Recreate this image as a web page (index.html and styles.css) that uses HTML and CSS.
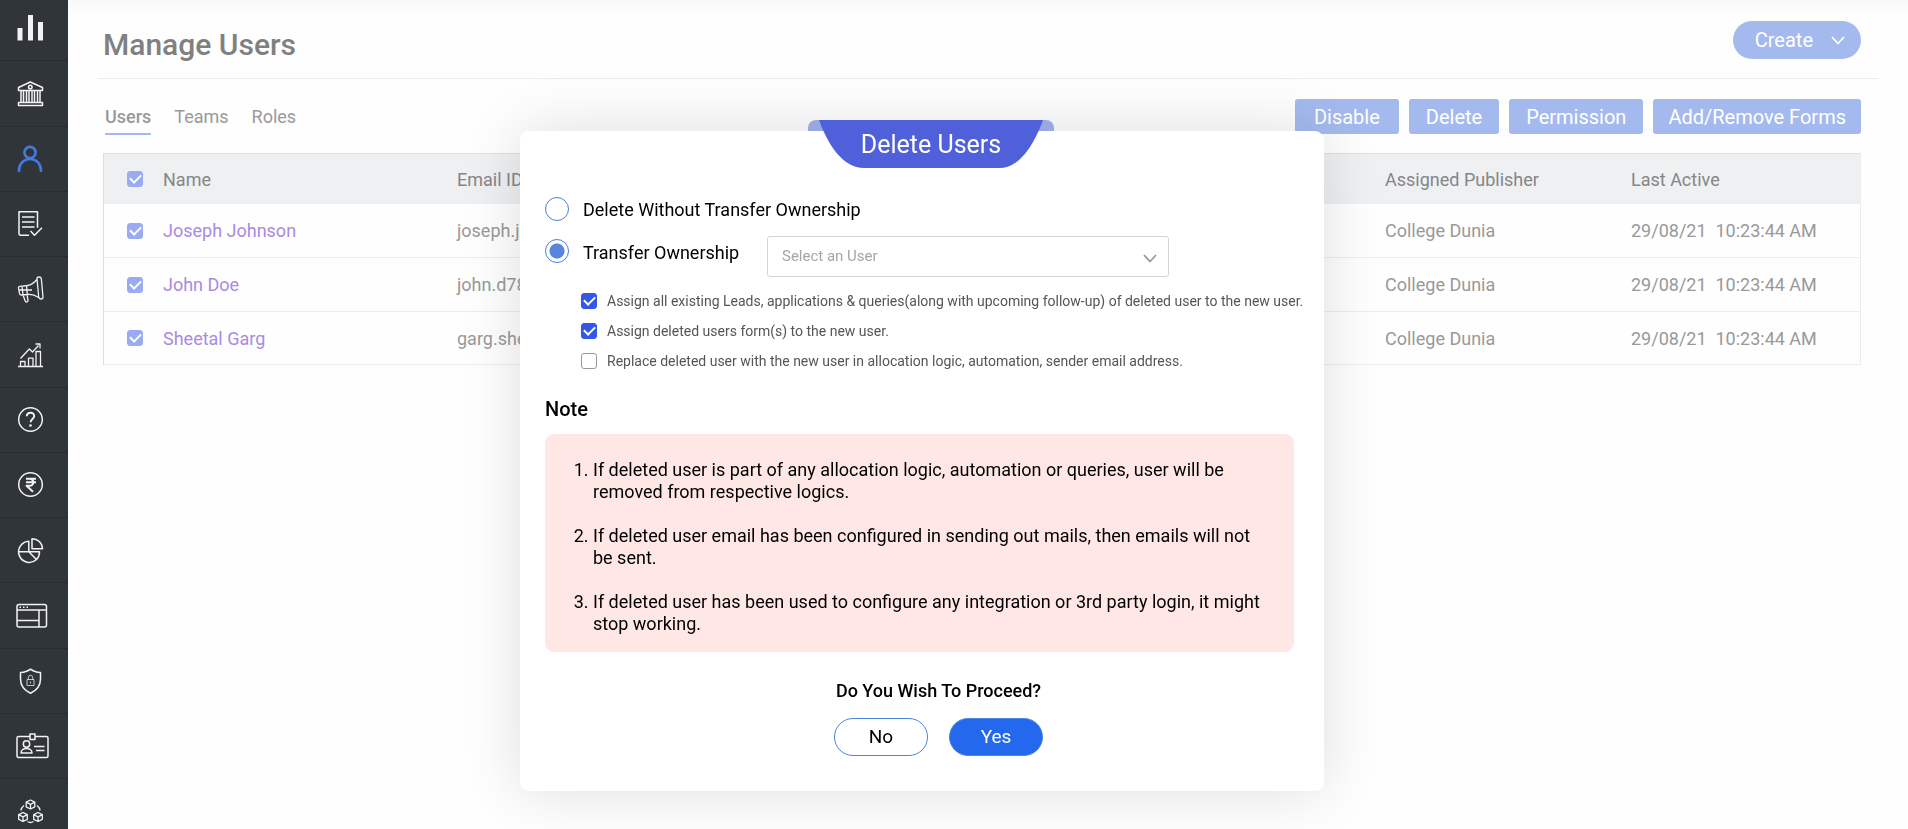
FILE: index.html
```html
<!DOCTYPE html>
<html lang="en">
<head>
<meta charset="utf-8">
<title>Manage Users</title>
<link rel="stylesheet" href="styles.css">
</head>
<body>
<div class="app">
  <nav class="sidebar" aria-label="Main">
    <a class="side-item" href="#" aria-label="Dashboard"><svg class="side-icon" viewBox="0 0 34 34"><path class="solid" d="M1.5 15h5v12.500h-5zM12 2h5v25.500h-5zM22 9h5v18.500h-5z"/></svg></a>
    <a class="side-item" href="#" aria-label="Institutes"><svg class="side-icon" viewBox="0 0 34 34"><path d="M2.500 13.500v-3L14.300 5l12.200 5.500v3zM5 13.500V25M7.500 13.500V25M10.500 13.500V25M13 13.500V25M16 13.500V25M18.500 13.500V25M21.500 13.500V25M24 13.500V25M2.500 25.500h24v3h-24z"/><circle cx="14.300" cy="10" r="1.800"/></svg></a>
    <a class="side-item active" href="#" aria-label="Users"><svg class="side-icon" viewBox="0 0 34 34"><circle cx="14" cy="10.500" r="5.600"/><path d="M3 30v-1.500C3 21.500 8 17 14 17s11 4.500 11 11.500V30"/></svg></a>
    <a class="side-item" href="#" aria-label="Applications"><svg class="side-icon" viewBox="0 0 34 34"><path d="M13 28.300H4.500a1.500 1.500 0 0 1-1.500-1.500V4.700h18.500v16M6 10h12.500M6 15h12.500M6 20h12.500M14.500 24l4 4.300 7.500-7.500"/></svg></a>
    <a class="side-item" href="#" aria-label="Campaigns"><svg class="side-icon thin" viewBox="0 0 34 34"><path d="M21 6.500q0-1.500 2-1.500 2 0 2.300 1.500L27 25q0 2-2 2-2 0-2.300-1.800zM21 7.500C18 11 15 13 11.500 13.500L4 14.300q-1.700.2-1.500 1.700l1 5.500Q3.700 23 5 23l7-.5c4-.5 7.500 1 10.700 3M10.500 13.600l.8 9M6 14.200l1 8.700M7 23l2.200 6q.5 1.300 1.800.9 1.300-.5 1-1.800l-1-5.400M3 18h13"/></svg></a>
    <a class="side-item" href="#" aria-label="Reports"><svg class="side-icon thin" viewBox="0 0 34 34"><path d="M2 28.500h25M4.500 28.500v-5h4.500v5M12.500 28.500v-8.300h4.500v8.300M20 28.500V13.500h4.500v15M4.500 20.500l8.800-9.500 3.200 3 6-6.500M19.500 6H24v4.500"/></svg></a>
    <a class="side-item" href="#" aria-label="Help"><svg class="side-icon" viewBox="0 0 34 34"><circle cx="14.500" cy="16.500" r="11.800"/><path class="bold" d="M10.800 13.300c0-4.800 7.400-4.600 7.400-.3 0 2.900-3.600 3-3.600 6.200"/><circle class="solid" cx="14.500" cy="22.500" r="1.300"/></svg></a>
    <a class="side-item" href="#" aria-label="Payments"><svg class="side-icon" viewBox="0 0 34 34"><circle cx="14.500" cy="16.500" r="11.800"/><path class="bold" d="M10 10.800h10M10 14.300h10M10 10.800h3.500c5 0 5 7 0 7h-3l6.500 6"/></svg></a>
    <a class="side-item" href="#" aria-label="Analytics"><svg class="side-icon" viewBox="0 0 34 34"><path d="M12.800 8.200A10.600 10.600 0 1 0 20.500 26.500L12.800 18.800zM2.500 18.800h21a10.600 10.600 0 0 1-3 7.700M16 5.700v10h10.500a10.300 10.300 0 0 0-10.500-10z"/></svg></a>
    <a class="side-item" href="#" aria-label="Widgets"><svg class="side-icon" viewBox="0 0 34 34"><rect x="1" y="5.500" width="29.500" height="22.500" rx="2"/><path d="M1 11h29.500M23 11v17M1 21.500h22"/><path d="M3.500 8.300h1.500M7 8.300h1.500M10.500 8.300h1.500"/></svg></a>
    <a class="side-item" href="#" aria-label="Security"><svg class="side-icon" viewBox="0 0 34 34"><path d="M14.500 5.200c2.800 2.200 6.300 3.300 10 3.400v6.400c0 6.500-3.500 11.200-10 14.200-6.500-3-10-7.700-10-14.200V8.600c3.700-.1 7.200-1.200 10-3.400z"/><path class="hair" d="M11 15.500h7v6h-7zM12.300 15.500v-2a2.200 2.200 0 0 1 4.400 0v2M14.500 17.500v2"/></svg></a>
    <a class="side-item" href="#" aria-label="Counsellors"><svg class="side-icon" viewBox="0 0 34 34"><path d="M14 7.500H2.500A1.500 1.500 0 0 0 1 9v18a1.500 1.500 0 0 0 1.500 1.500h28A1.500 1.500 0 0 0 32 27V9a1.500 1.500 0 0 0-1.500-1.500H19M14 5h5v5.500h-5zM5 24c0-6 11-6 11 0zM18 17.500h10.500M20 21.500h8.500"/><circle cx="10.500" cy="15" r="3.200"/></svg></a>
    <a class="side-item" href="#" aria-label="Integrations"><svg class="side-icon thin" viewBox="0 0 34 34"><path d="M14.500 6l4.300 2.200v4.600l-4.300 2.200-4.300-2.200V8.200zM10.200 8.200l4.300 2.200 4.300-2.200M14.500 10.400V15M7 18.500l4.300 2.200v4.600L7 27.500l-4.300-2.200v-4.600zM2.700 20.700L7 22.900l4.300-2.200M7 22.900v4.600M22 18.500l4.300 2.200v4.600L22 27.500l-4.300-2.200v-4.600zM17.700 20.700l4.300 2.200 4.300-2.200M22 22.900v4.600M8 11.500c-2 1.500-3 3-3 5M21 11.500c2 1.500 3 3 3 5M11.500 27.500c2 1.300 4 1.300 6 0"/></svg></a>
  </nav>

  <main class="page">
    <header class="page-head">
      <h1 class="page-title">Manage Users</h1>
      <button class="create" type="button">Create
        <svg class="chevron" viewBox="0 0 14 9"><path d="M1 1l6 6.500L13 1"/></svg>
      </button>
    </header>
    <section class="content">
      <div class="toolbar">
        <nav class="tabs" aria-label="Sections">
          <a class="tab current" href="#">Users</a>
          <a class="tab" href="#">Teams</a>
          <a class="tab" href="#">Roles</a>
        </nav>
        <div class="actions">
          <button class="action roomy" type="button">Disable</button>
          <button class="action" type="button">Delete</button>
          <button class="action" type="button">Permission</button>
          <button class="action snug" type="button">Add/Remove Forms</button>
        </div>
      </div>
      <table class="users">
        <colgroup><col class="col-check"><col class="col-name"><col><col class="col-publisher"><col class="col-active"></colgroup>
        <thead>
          <tr><th class="pick"><input class="tick faded" type="checkbox" checked aria-label="Select all"></th><th>Name</th><th>Email ID</th><th>Assigned Publisher</th><th>Last Active</th></tr>
        </thead>
        <tbody>
          <tr><td class="pick"><input class="tick faded" type="checkbox" checked aria-label="Select Joseph Johnson"></td><td><a class="person" href="#">Joseph Johnson</a></td><td>joseph.j</td><td>College Dunia</td><td>29/08/21&nbsp; 10:23:44 AM</td></tr>
          <tr><td class="pick"><input class="tick faded" type="checkbox" checked aria-label="Select John Doe"></td><td><a class="person" href="#">John Doe</a></td><td>john.d78</td><td>College Dunia</td><td>29/08/21&nbsp; 10:23:44 AM</td></tr>
          <tr><td class="pick"><input class="tick faded" type="checkbox" checked aria-label="Select Sheetal Garg"></td><td><a class="person" href="#">Sheetal Garg</a></td><td>garg.she</td><td>College Dunia</td><td>29/08/21&nbsp; 10:23:44 AM</td></tr>
        </tbody>
      </table>
    </section>
  </main>
</div>

<div class="overlay">
  <form class="dialog" role="dialog" aria-labelledby="dialog-title">
    <div class="ribbon">
      <svg class="ribbon-shape" viewBox="0 0 246 48"><path class="ribbon-fold" d="M0 11V8a8 8 0 0 1 8-8h230a8 8 0 0 1 8 8v3z"/><path class="ribbon-face" d="M11 0h224C226 25 211 48 192 48H56C35 48 20 25 11 0z"/></svg>
      <h2 class="ribbon-title" id="dialog-title">Delete Users</h2>
    </div>
    <label class="option"><input class="radio" type="radio" name="mode">Delete Without Transfer Ownership</label>
    <div class="transfer">
      <label class="option"><input class="radio" type="radio" name="mode" checked>Transfer Ownership</label>
      <div class="picker">
        <select class="picker-field" aria-label="New owner"><option>Select an User</option></select>
        <svg class="chevron picker-arrow" viewBox="0 0 14 9"><path d="M1 1l6 6.500L13 1"/></svg>
      </div>
    </div>
    <div class="checks">
      <label class="check"><input class="tick" type="checkbox" checked>Assign all existing Leads, applications &amp; queries(along with upcoming follow-up) of deleted user to the new user.</label>
      <label class="check"><input class="tick" type="checkbox" checked>Assign deleted users form(s) to the new user.</label>
      <label class="check"><input class="tick" type="checkbox">Replace deleted user with the new user in allocation logic, automation, sender email address.</label>
    </div>
    <h3 class="note-title">Note</h3>
    <ol class="notes">
      <li>If deleted user is part of any allocation logic, automation or queries, user will be removed from respective logics.</li>
      <li>If deleted user email has been configured in sending out mails, then emails will not be sent.</li>
      <li>If deleted user has been used to configure any integration or 3rd party login, it might stop working.</li>
    </ol>
    <div class="confirm">
      <p class="question">Do You Wish To Proceed?</p>
      <div class="answers">
        <button class="answer" type="button">No</button>
        <button class="answer yes" type="button">Yes</button>
      </div>
    </div>
  </form>
</div>
</body>
</html>
```

FILE: styles.css
```css
* { box-sizing: border-box; }

body {
  margin: 0;
  font-family: Roboto, "Liberation Sans", sans-serif;
  font-size: 18px;
  color: #999;
  background: #fefefe;
}

h1, h2, h3, p, ol { margin: 0; padding: 0; font-weight: 500; }
a { color: inherit; text-decoration: none; }
button, select { font: inherit; cursor: pointer; }

.app { display: flex; height: 100vh; overflow: hidden; }

/* Sidebar */
.sidebar { flex: none; width: 68px; overflow: hidden; background: #30353a; }
.side-item {
  display: flex;
  align-items: center;
  height: 65px;
  padding-left: 16px;
  border-bottom: 1px solid #282c31;
  color: #f2f2f4;
}
.side-item:first-child { height: 61px; }
.side-item:nth-child(4n + 2) { height: 66px; }
.side-item.active { color: #4478e2; }
.side-icon {
  width: 34px;
  height: 34px;
  fill: none;
  stroke: currentColor;
  stroke-width: 1.5;
  stroke-linejoin: round;
}
.side-icon.thin { stroke-width: 1.3; }
.side-icon .bold { stroke-width: 1.9; }
.side-icon .hair { stroke-width: 1; opacity: .75; }
.side-icon .solid { fill: currentColor; stroke: none; }
.side-item.active .side-icon { stroke-width: 2.6; }

/* Page */
.page {
  flex: 1;
  padding: 0 30px;
  background: linear-gradient(#f8f8f8, #fefefe 14px);
}
.page-head {
  display: flex;
  justify-content: space-between;
  align-items: flex-start;
  padding: 21px 17px 9px 5px;
  border-bottom: 1px solid #ececec;
}
.page-title { font-size: 30px; line-height: 48px; color: #808080; }
.create {
  display: flex;
  align-items: center;
  gap: 18px;
  height: 38px;
  padding: 0 16px 0 22px;
  border: 0;
  border-radius: 19px;
  background: #a4baee;
  color: #fff;
  font-size: 20px;
}
.chevron { width: 14px; height: 9px; fill: none; stroke: currentColor; stroke-width: 1.8; }

.content { padding: 20px 17px 0 5px; }
.toolbar { display: flex; justify-content: space-between; margin-bottom: 18px; }
.tabs { display: flex; gap: 23px; padding-left: 2px; }
.tab { height: 36px; line-height: 36px; border-bottom: 2px solid transparent; }
.tab.current { font-weight: 500; border-color: #a4baee; }
.actions { display: flex; gap: 10px; }
.action {
  height: 35px;
  padding: 0 17px;
  border: 0;
  border-radius: 3px;
  background: #a4baee;
  color: #fff;
  font-size: 20px;
}
.action.roomy { padding: 0 19px; }
.action.snug { padding: 0 15px; }

.users {
  width: 100%;
  table-layout: fixed;
  border-spacing: 0;
  border: 1px solid #dddfe2;
  border-right-color: #ececec;
  border-bottom: 0;
}
.col-check { width: 59px; }
.col-name { width: 294px; }
.col-publisher { width: 246px; }
.col-active { width: 229px; }
.users th {
  height: 50px;
  padding: 0;
  background: #eff0f2;
  color: #858688;
  font-weight: 400;
  text-align: left;
}
.users td { height: 54px; padding: 0; border-bottom: 1px solid #ececec; }
.users tr:last-child td { height: 53px; }
.users .pick { padding-left: 23px; }
.person { color: #a98be0; }

.tick {
  appearance: none;
  display: grid;
  place-items: center;
  flex: none;
  width: 16px;
  height: 16px;
  margin: 0;
  border: 1px solid #999;
  border-radius: 3px;
  background: #fff;
}
.tick:checked { border-color: #3457e6; background: #3457e6; }
.tick.faded:checked { border-color: #9aabf3; background: #9aabf3; }
.tick:checked::before {
  content: "";
  width: 5px;
  height: 9px;
  margin-bottom: 3px;
  border: solid #fff;
  border-width: 0 2px 2px 0;
  transform: rotate(45deg);
}

/* Dialog */
.overlay {
  position: fixed;
  inset: 0;
  display: flex;
  justify-content: center;
  align-items: flex-start;
  padding: 131px 64px 0 0;
}
.dialog {
  position: relative;
  width: 804px;
  padding: 66px 21px 35px 25px;
  border-radius: 9px;
  background: #fff;
  box-shadow: 0 0 60px rgba(0, 0, 0, .13);
  color: #000;
}
.ribbon {
  position: absolute;
  top: -11px;
  left: 288px;
  width: 246px;
  height: 48px;
}
.ribbon-shape { position: absolute; inset: 0; }
.ribbon-fold { fill: #98a9e2; }
.ribbon-face { fill: #5060da; }
.ribbon-title {
  position: relative;
  color: #fff;
  font-size: 25px;
  font-weight: 400;
  line-height: 50px;
  text-align: center;
}
.option { display: flex; gap: 14px; line-height: 26px; }
.radio {
  appearance: none;
  flex: none;
  width: 24px;
  height: 24px;
  margin: 0;
  border: 1px solid #4a7de0;
  border-radius: 50%;
}
.radio:checked { background: radial-gradient(circle, #5785e0 7px, transparent 8px); }
.transfer { display: flex; justify-content: space-between; margin-top: 13px; padding-right: 134px; }
.transfer .option { padding-top: 3px; line-height: 28px; }
.picker { position: relative; width: 402px; }
.picker-field {
  appearance: none;
  width: 100%;
  height: 41px;
  padding: 0 14px 2px;
  border: 1px solid #d4d4d4;
  border-radius: 3px;
  background: #fff;
  color: #a6a6a6;
  font-size: 15px;
}
.picker-arrow { position: absolute; top: 18px; right: 12px; color: #999; pointer-events: none; }
.checks { display: grid; gap: 10px; margin: 14px 0 26px; padding-left: 36px; }
.check {
  display: flex;
  align-items: center;
  gap: 10px;
  color: #555;
  font-size: 14px;
  line-height: 20px;
  white-space: nowrap;
}
.note-title { font-size: 20px; line-height: 24px; }
.notes {
  display: grid;
  gap: 22px;
  margin: 13px 9px 27px 0;
  padding: 25px 30px 17px 48px;
  border-radius: 9px;
  background: #ffe7e6;
  font-weight: 400;
  line-height: 22px;
}
.confirm { padding-left: 29px; text-align: center; }
.question { line-height: 24px; }
.answers { display: flex; justify-content: center; gap: 21px; margin-top: 15px; }
.answer {
  width: 94px;
  height: 38px;
  padding: 0 0 2px;
  border: 1px solid #4a86dc;
  border-radius: 19px;
  background: #fff;
  color: #000;
  font-size: 19px;
}
.answer.yes { background: #2468ee; color: #fff; }
```
